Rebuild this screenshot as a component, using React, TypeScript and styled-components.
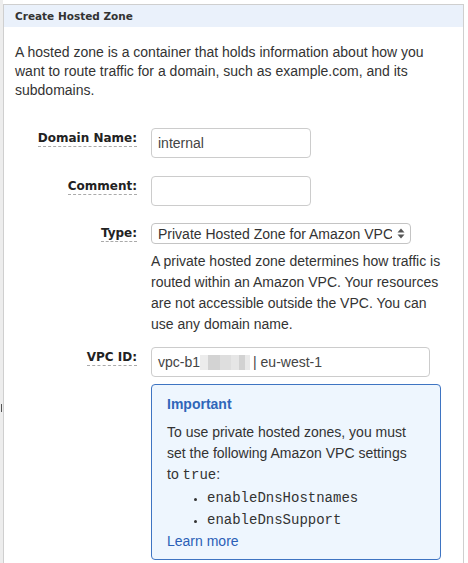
import React from 'react'
import styled, { createGlobalStyle } from 'styled-components'

const GlobalStyle = createGlobalStyle`
    html, body {
        margin: 0;
        padding: 0;
        background: #fff;
    }
    body {
        font-family: "Liberation Sans", Arial, sans-serif;
        color: #333;
    }
`

const PageStyle = styled.div`
    display: flex;
    height: 563px;
    overflow: hidden;
`

const GutterStyle = styled.div`
    position: relative;
    width: 3px;
    flex: none;
    background: #ededed;
`

// small scroll marker at the page edge
const TickStyle = styled.span`
    position: absolute;
    left: 1px;
    top: 404px;
    width: 1px;
    height: 8px;
    background: #555;
`

const PanelStyle = styled.section`
    margin-top: 4px;
    width: 459px;
    flex: none;
    border: 1px solid #cfcfcf;
    border-bottom: none;
    background: #fff;
`

const HeaderStyle = styled.div`
    height: 22px;
    line-height: 23px;
    padding-left: 11px;
    background: #eaf1fb;
    font-family: "DejaVu Sans", Verdana, sans-serif;
    font-weight: bold;
    font-size: 10.5px;
    color: #333;
`

const BodyStyle = styled.div`
    padding: 16px 11px 0 11px;
`

const IntroStyle = styled.p`
    margin: 0 0 28px 0;
    font-size: 14px;
    line-height: 19px;
    color: #333;
`

const RowStyle = styled.div<{ $gap: number }>`
    display: grid;
    grid-template-columns: 122px 1fr;
    column-gap: 14px;
    margin-bottom: ${p => p.$gap}px;
`

const LabelStyle = styled.label`
    justify-self: end;
    align-self: start;
    margin-top: 2px;
    font-family: "DejaVu Sans", Verdana, sans-serif;
    font-weight: bold;
    font-size: 12px;
    line-height: 16px;
    color: #222;
    border-bottom: 1px dashed #aaa;
`

const FieldStyle = styled.div`
    display: flex;
    flex-direction: column;
    align-items: flex-start;
`

const InputStyle = styled.input<{ $w: number }>`
    box-sizing: border-box;
    width: ${p => p.$w}px;
    height: 30px;
    padding: 0 6px;
    border: 1px solid #ccc;
    border-radius: 4px;
    font-family: "Liberation Sans", Arial, sans-serif;
    font-size: 14px;
    color: #444;
    outline: none;
`

const FakeInputStyle = styled.div<{ $w: number }>`
    box-sizing: border-box;
    display: flex;
    align-items: center;
    width: ${p => p.$w}px;
    height: 30px;
    padding: 0 6px;
    border: 1px solid #ccc;
    border-radius: 4px;
    font-size: 14px;
    color: #444;
    white-space: pre;
`

const BlurStyle = styled.span`
    display: inline-block;
    width: 50px;
    height: 15px;
    margin-right: 3px;
    background: linear-gradient(to right,
        #ececec 0 8px, #d3d3d3 8px 20px, #dedede 20px 31px,
        #e6e6e6 31px 39px, #d2d2d2 39px 45px, #e9e9e9 45px);
`

const SelectWrap = styled.div`
    position: relative;
    width: 260px;
`

const SelectStyle = styled.select`
    appearance: none;
    box-sizing: border-box;
    width: 260px;
    height: 21px;
    padding: 0 18px 0 6px;
    border: 1px solid #c4c4c4;
    border-radius: 4px;
    background: #fff;
    font-family: "Liberation Sans", Arial, sans-serif;
    font-size: 14px;
    color: #333;
    outline: none;
`

const ArrowsStyle = styled.svg`
    position: absolute;
    right: 6px;
    top: 5px;
    pointer-events: none;
`

const HintStyle = styled.p`
    margin: 7px 0 0 0;
    font-size: 14px;
    line-height: 21px;
    color: #333;
`

const NoticeStyle = styled.div`
    box-sizing: border-box;
    width: 290px;
    margin-top: 7px;
    padding: 10px 28px 8px 15px;
    border: 1px solid #3e74c2;
    border-radius: 4px;
    background: #eef6fe;
`

const NoticeTitle = styled.div`
    font-weight: bold;
    font-size: 14px;
    line-height: 18px;
    color: #2f66b9;
    margin-bottom: 9px;
`

const NoticeText = styled.div`
    font-size: 14px;
    line-height: 21px;
    color: #333;
`

const CodeStyle = styled.code`
    font-family: "Liberation Mono", "Courier New", monospace;
    font-size: 14px;
`

const ListStyle = styled.ul`
    margin: 1px 0 0 0;
    padding-left: 40px;
    list-style: disc;
    line-height: 21px;
    li::marker {
        font-size: 11px;
    }
`

const LinkStyle = styled.a`
    display: block;
    color: #2a5fb7;
    text-decoration: none;
    font-size: 14px;
    line-height: 20px;
`

const SelectArrows = () => (
    <ArrowsStyle width="8" height="11" viewBox="0 0 8 11">
        <path d="M4 0.5 L7.5 4.5 H0.5 Z" fill="#555" />
        <path d="M4 10.5 L7.5 6.5 H0.5 Z" fill="#555" />
    </ArrowsStyle>
)

export default function App() {
    return (
        <>
            <GlobalStyle />
            <PageStyle>
                <GutterStyle>
                    <TickStyle />
                </GutterStyle>
                <PanelStyle>
                    <HeaderStyle>Create Hosted Zone</HeaderStyle>
                    <BodyStyle>
                        <IntroStyle>
                            A hosted zone is a container that holds information about how you
                            want to route traffic for a domain, such as example.com, and its
                            subdomains.
                        </IntroStyle>

                        <RowStyle $gap={18}>
                            <LabelStyle>Domain Name:</LabelStyle>
                            <FieldStyle>
                                <InputStyle $w={160} defaultValue="internal" />
                            </FieldStyle>
                        </RowStyle>

                        <RowStyle $gap={17}>
                            <LabelStyle>Comment:</LabelStyle>
                            <FieldStyle>
                                <InputStyle $w={160} defaultValue="" />
                            </FieldStyle>
                        </RowStyle>

                        <RowStyle $gap={12}>
                            <LabelStyle>Type:</LabelStyle>
                            <FieldStyle>
                                <SelectWrap>
                                    <SelectStyle defaultValue="private">
                                        <option value="public">Public Hosted Zone</option>
                                        <option value="private">Private Hosted Zone for Amazon VPC</option>
                                    </SelectStyle>
                                    <SelectArrows />
                                </SelectWrap>
                                <HintStyle>
                                    A private hosted zone determines how traffic is
                                    routed within an Amazon VPC. Your resources
                                    are not accessible outside the VPC. You can
                                    use any domain name.
                                </HintStyle>
                            </FieldStyle>
                        </RowStyle>

                        <RowStyle $gap={0}>
                            <LabelStyle>VPC ID:</LabelStyle>
                            <FieldStyle>
                                <FakeInputStyle $w={279}>
                                    vpc-b1<BlurStyle />| eu-west-1
                                </FakeInputStyle>
                                <NoticeStyle>
                                    <NoticeTitle>Important</NoticeTitle>
                                    <NoticeText>
                                        To use private hosted zones, you must
                                        set the following Amazon VPC settings
                                        to <CodeStyle>true</CodeStyle>:
                                        <ListStyle>
                                            <li><CodeStyle>enableDnsHostnames</CodeStyle></li>
                                            <li><CodeStyle>enableDnsSupport</CodeStyle></li>
                                        </ListStyle>
                                    </NoticeText>
                                    <LinkStyle href="#">Learn more</LinkStyle>
                                </NoticeStyle>
                            </FieldStyle>
                        </RowStyle>
                    </BodyStyle>
                </PanelStyle>
            </PageStyle>
        </>
    )
}
